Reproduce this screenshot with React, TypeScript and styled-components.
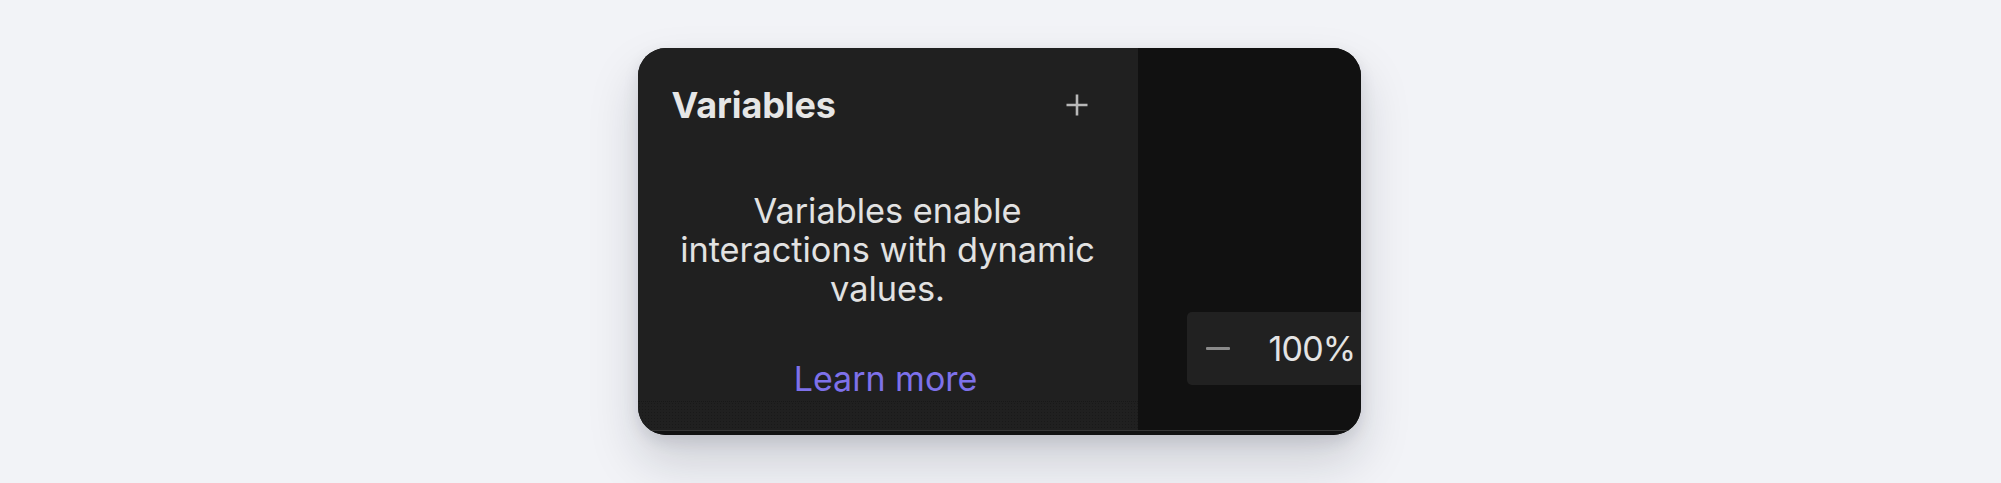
import React from "react";
import styled, { createGlobalStyle } from "styled-components";

const Global = createGlobalStyle`
  html, body { margin: 0; padding: 0; background: #f2f3f7; }
  body { font-family: Inter, "Noto Sans", sans-serif; -webkit-font-smoothing: antialiased; }
`;

const Page = styled.div`
  width: 2001px;
  height: 483px;
  display: flex;
  align-items: center;
  justify-content: center;
  padding-right: 3px;
  box-sizing: border-box;
  overflow: hidden;
`;

const Card = styled.div`
  width: 723px;
  height: 387px;
  border-radius: 28px;
  overflow: hidden;
  background: #111111;
  display: flex;
  flex-direction: column;
  box-shadow: 0 26px 50px rgba(20, 24, 40, 0.17), 0 6px 16px rgba(20, 24, 40, 0.1);
`;

const Body = styled.div`
  flex: 1;
  display: flex;
  min-height: 0;
`;

const Sidebar = styled.div`
  width: 500px;
  background: #202020;
  display: flex;
  flex-direction: column;
  position: relative;
`;

const Header = styled.div`
  height: 114px;
  padding: 0 41px 0 34px;
  display: flex;
  align-items: center;
  justify-content: space-between;
  box-sizing: border-box;
`;

const Title = styled.h2`
  margin: 0;
  font-size: 36px;
  font-weight: 700;
  letter-spacing: -0.1px;
  color: #e6e6e6;
`;

const IconButton = styled.button`
  width: 40px;
  height: 40px;
  padding: 0;
  border: 0;
  background: transparent;
  color: #b8b8b8;
  display: flex;
  align-items: center;
  justify-content: center;
`;

const Empty = styled.div`
  flex: 1;
  display: flex;
  flex-direction: column;
  align-items: center;
  padding: 29px 20px 0;
  text-align: center;
`;

const Description = styled.p`
  margin: 0;
  font-size: 34.3px;
  line-height: 39px;
  font-weight: 400;
  color: #e2e2e2;
`;

const LearnMore = styled.a`
  margin-top: 51px;
  margin-right: 4px;
  font-size: 34px;
  line-height: 40px;
  color: #7e71ea;
  text-decoration: none;
`;

const Footer = styled.div`
  height: 28px;
  border-top: 1px dotted rgba(0, 0, 0, 0.25);
  background-image: radial-gradient(rgba(0, 0, 0, 0.22) 0.6px, transparent 0.8px);
  background-size: 3px 3px;
`;

const Canvas = styled.div`
  flex: 1;
  background: #111111;
  position: relative;
`;

const ZoomControl = styled.div`
  position: absolute;
  left: 49px;
  bottom: 45px;
  width: 260px;
  height: 73px;
  border-radius: 5px;
  background: #212121;
  display: flex;
  align-items: center;
  padding-left: 19px;
  box-sizing: border-box;
`;

const Minus = styled.span`
  width: 24px;
  height: 3px;
  background: #8a8a8a;
  border-radius: 1px;
`;

const ZoomValue = styled.span`
  margin-left: 39px;
  font-size: 34px;
  letter-spacing: -0.8px;
  color: #e4e4e4;
`;

const BottomEdge = styled.div`
  height: 4px;
  border-top: 1px solid #343434;
  background: #111111;
`;

export default function App() {
  return (
    <>
      <Global />
      <Page>
        <Card>
          <Body>
            <Sidebar>
              <Header>
                <Title>Variables</Title>
                <IconButton aria-label="Add variable">
                  <svg width="24" height="24" viewBox="0 0 24 24" fill="none">
                    <path d="M12 1.5v21M1.5 12h21" stroke="currentColor" strokeWidth="2.6" />
                  </svg>
                </IconButton>
              </Header>
              <Empty>
                <Description>
                  Variables enable
                  <br />
                  interactions with dynamic
                  <br />
                  values.
                </Description>
                <LearnMore href="#">Learn more</LearnMore>
              </Empty>
              <Footer />
            </Sidebar>
            <Canvas>
              <ZoomControl>
                <Minus />
                <ZoomValue>100%</ZoomValue>
              </ZoomControl>
            </Canvas>
          </Body>
          <BottomEdge />
        </Card>
      </Page>
    </>
  );
}
